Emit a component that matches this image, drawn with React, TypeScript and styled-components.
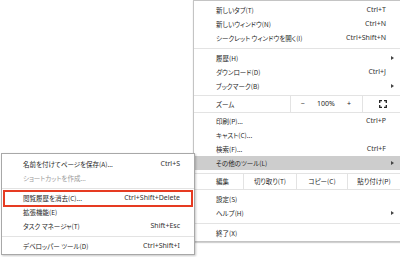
import React from "react";
import styled, { createGlobalStyle } from "styled-components";

const GlobalStyle = createGlobalStyle`
  html, body { margin: 0; padding: 0; background: #ffffff; }
  body {
    font-family: "Noto Sans CJK JP", "Noto Sans", sans-serif;
    font-feature-settings: "palt";
    color: #262626;
  }
`;

const Page = styled.div`
  position: relative;
  width: 400px;
  height: 257px;
  overflow: hidden;
  display: flex;
  justify-content: flex-end;
  align-items: flex-start;
  background: #ffffff;
`;

const MainMenu = styled.div`
  width: 206px;
  background: #ffffff;
  border: 1px solid #c4c4c4;
  border-right: none;
  box-shadow: 0 1px 1px rgba(0, 0, 0, 0.18);
  padding: 2px 0 1px;
  display: flex;
  flex-direction: column;
`;

const SubMenu = styled.div`
  position: absolute;
  left: 1px;
  top: 153px;
  width: 192px;
  background: #ffffff;
  border: 1px solid #a8a8a8;
  box-shadow: 1px 1px 2px rgba(0, 0, 0, 0.22);
  padding: 3px 0 1px;
  display: flex;
  flex-direction: column;
`;

const Item = styled.div<{ $active?: boolean; $disabled?: boolean; $sub?: boolean; $marked?: boolean }>`
  position: relative;
  display: flex;
  align-items: center;
  height: 14px;
  padding: ${(p) => (p.$sub ? "0 14px 0 21px" : "0 14px 0 22px")};
  font-size: 6.5px;
  line-height: 14px;
  white-space: nowrap;
  background: ${(p) => (p.$active ? "#cdcdcd" : "transparent")};
  color: ${(p) => (p.$disabled ? "#9a9a9a" : "#262626")};
  ${(p) =>
    p.$marked
      ? `&::after {
          content: "";
          position: absolute;
          left: 1px;
          right: 1px;
          top: -1px;
          bottom: -2px;
          border: 2px solid #e63b22;
        }`
      : ""}
`;

const Label = styled.span`
  flex: 1;
`;

const Shortcut = styled.span`
  color: #333333;
  font-family: "Noto Sans", sans-serif;
  font-size: 7px;
`;

const Arrow = styled.span`
  width: 0;
  height: 0;
  margin-right: -8px;
  border-left: 3px solid #444444;
  border-top: 2.5px solid transparent;
  border-bottom: 2.5px solid transparent;
`;

const Separator = styled.div`
  height: 1px;
  background: #e3e3e3;
  margin: 3px 0 2px;
`;

const ZoomRow = styled.div`
  display: grid;
  grid-template-columns: 96px 72px 1fr;
  height: 16px;
  margin: 2px 0 1px;
  border-top: 1px solid #e3e3e3;
  border-bottom: 1px solid #e3e3e3;
  font-size: 6.5px;
  line-height: 16px;
`;

const ZoomLabel = styled.div`
  padding-left: 22px;
`;

const ZoomControls = styled.div`
  border-left: 1px solid #e3e3e3;
  display: flex;
  justify-content: space-between;
  align-items: center;
  padding: 0 11px 0 10px;
  font-family: "Noto Sans", sans-serif;
  font-size: 7px;
`;

const FullscreenCell = styled.div`
  border-left: 1px solid #e3e3e3;
  display: flex;
  align-items: center;
  justify-content: center;
  padding-left: 2px;
`;

const EditRow = styled.div`
  display: grid;
  grid-template-columns: 49px 53px 51px 1fr;
  height: 15px;
  margin: 3px 0 2px;
  border-top: 1px solid #e3e3e3;
  border-bottom: 1px solid #e3e3e3;
  font-size: 6.5px;
  line-height: 15px;
`;

const EditCell = styled.div<{ $first?: boolean }>`
  border-left: ${(p) => (p.$first ? "none" : "1px solid #e3e3e3")};
  padding-left: ${(p) => (p.$first ? "22px" : "0")};
  text-align: ${(p) => (p.$first ? "left" : "center")};
  white-space: nowrap;
`;

const FullscreenIcon = () => (
  <svg width="8" height="8" viewBox="0 0 8 8" fill="none" stroke="#222" strokeWidth="1.3">
    <path d="M0.7 3V0.7H3M5 0.7H7.3V3M7.3 5V7.3H5M3 7.3H0.7V5" />
  </svg>
);

type Entry = { label: string; shortcut?: string; arrow?: boolean; active?: boolean; disabled?: boolean; marked?: boolean };

const MenuItem = ({ e, sub }: { e: Entry; sub?: boolean }) => (
  <Item $active={e.active} $disabled={e.disabled} $sub={sub} $marked={e.marked}>
    <Label>{e.label}</Label>
    {e.shortcut && <Shortcut>{e.shortcut}</Shortcut>}
    {e.arrow && <Arrow />}
  </Item>
);

export default function App() {
  return (
    <>
      <GlobalStyle />
      <Page>
        <MainMenu>
          <MenuItem e={{ label: "新しいタブ(T)", shortcut: "Ctrl+T" }} />
          <MenuItem e={{ label: "新しいウィンドウ(N)", shortcut: "Ctrl+N" }} />
          <MenuItem e={{ label: "シークレット ウィンドウを開く(I)", shortcut: "Ctrl+Shift+N" }} />
          <Separator />
          <MenuItem e={{ label: "履歴(H)", arrow: true }} />
          <MenuItem e={{ label: "ダウンロード(D)", shortcut: "Ctrl+J" }} />
          <MenuItem e={{ label: "ブックマーク(B)", arrow: true }} />
          <ZoomRow>
            <ZoomLabel>ズーム</ZoomLabel>
            <ZoomControls>
              <span>−</span>
              <span>100%</span>
              <span>+</span>
            </ZoomControls>
            <FullscreenCell>
              <FullscreenIcon />
            </FullscreenCell>
          </ZoomRow>
          <MenuItem e={{ label: "印刷(P)...", shortcut: "Ctrl+P" }} />
          <MenuItem e={{ label: "キャスト(C)..." }} />
          <MenuItem e={{ label: "検索(F)...", shortcut: "Ctrl+F" }} />
          <MenuItem e={{ label: "その他のツール(L)", arrow: true, active: true }} />
          <EditRow>
            <EditCell $first>編集</EditCell>
            <EditCell>切り取り(T)</EditCell>
            <EditCell>コピー(C)</EditCell>
            <EditCell>貼り付け(P)</EditCell>
          </EditRow>
          <MenuItem e={{ label: "設定(S)" }} />
          <MenuItem e={{ label: "ヘルプ(H)", arrow: true }} />
          <Separator />
          <MenuItem e={{ label: "終了(X)" }} />
        </MainMenu>
        <SubMenu>
          <MenuItem sub e={{ label: "名前を付けてページを保存(A)...", shortcut: "Ctrl+S" }} />
          <MenuItem sub e={{ label: "ショートカットを作成...", disabled: true }} />
          <Separator />
          <MenuItem sub e={{ label: "閲覧履歴を消去(C)...", shortcut: "Ctrl+Shift+Delete", marked: true }} />
          <MenuItem sub e={{ label: "拡張機能(E)" }} />
          <MenuItem sub e={{ label: "タスク マネージャ(T)", shortcut: "Shift+Esc" }} />
          <Separator />
          <MenuItem sub e={{ label: "デベロッパー ツール(D)", shortcut: "Ctrl+Shift+I" }} />
        </SubMenu>
      </Page>
    </>
  );
}
